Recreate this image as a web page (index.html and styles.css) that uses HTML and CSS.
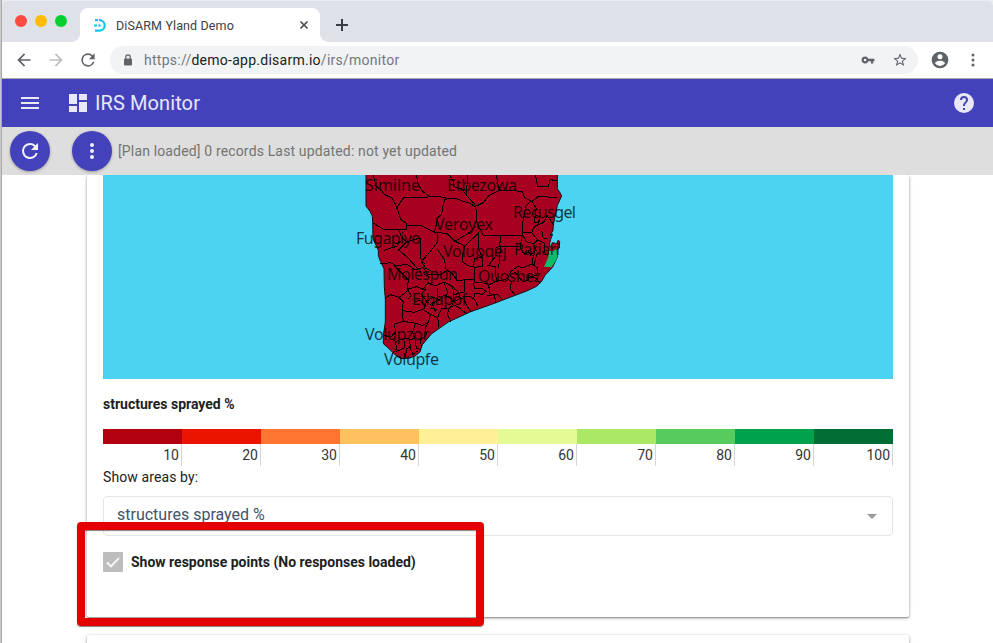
FILE: index.html
```html
<!DOCTYPE html>
<html lang="en">
<head>
<meta charset="utf-8">
<title>DiSARM Yland Demo</title>
<link rel="stylesheet" href="styles.css">
</head>
<body>
<div class="desktop">
<div class="window">
  <div class="tabs">
    <div class="lights"><i class="red"></i><i class="yellow"></i><i class="green"></i></div>
    <div class="tab">
      <svg class="favicon" width="12" height="13" viewBox="0 0 12 13"><path d="M1 1.2h4.5a5.2 5.2 0 0 1 0 10.4H1" fill="none" stroke="#0fc6ee" stroke-width="2.2" stroke-dasharray="3 1 30"/><path d="M0 6.4h3" stroke="#0fc6ee" stroke-width="2"/><circle cx="5.5" cy="6.4" r="1.2" fill="#0fc6ee"/></svg>
      <span class="tab-title">DiSARM Yland Demo</span>
      <svg class="close" width="8" height="8" viewBox="0 0 8 8"><path d="M.5.5l7 7M7.500.5l-7 7" stroke="#50545a" stroke-width="1.6"/></svg>
    </div>
    <svg class="plus" width="12" height="12" viewBox="0 0 12 12"><path d="M6 0v12M0 6h12" stroke="#3b3f43" stroke-width="2"/></svg>
  </div>
  <div class="toolbar">
    <svg class="nav" viewBox="0 0 24 24"><path fill="#5f6368" d="M20 11H7.830l5.590-5.590L12 4l-8 8 8 8 1.410-1.410L7.830 13H20v-2z"/></svg>
    <svg class="nav" viewBox="0 0 24 24"><path fill="#bcbec1" d="M4 11h12.170l-5.590-5.590L12 4l8 8-8 8-1.410-1.410L16.170 13H4v-2z"/></svg>
    <svg class="nav" viewBox="0 0 24 24"><path fill="#5f6368" d="M17.650 6.350A7.960 7.960 0 0 0 12 4a8 8 0 1 0 7.730 10h-2.080A6 6 0 1 1 12 6c1.660 0 3.140.69 4.220 1.780L13 11h7V4l-2.350 2.350z"/></svg>
    <div class="address">
      <svg class="lock" width="8" height="12" viewBox="0 0 8 12"><rect y="4.500" width="8" height="7" rx="1" fill="#5f6368"/><path d="M1.800 5V3a2.200 2.200 0 0 1 4.400 0v2" fill="none" stroke="#5f6368" stroke-width="1.200"/></svg>
      <span class="url">https://<b>demo-app.disarm.io</b>/irs/monitor</span>
      <svg class="key" width="14" height="14" viewBox="0 0 24 24"><path fill="#5f6368" d="M12.650 10A6 6 0 0 0 7 6a6 6 0 1 0 5.650 8H17v4h4v-4h2v-4H12.650zM7 14.200a2.200 2.200 0 1 1 0-4.400 2.200 2.200 0 0 1 0 4.400z"/></svg>
      <svg class="star" width="16" height="16" viewBox="0 0 24 24"><path fill="#5f6368" d="M22 9.240l-7.190-.62L12 2 9.190 8.630 2 9.240l5.460 4.730L5.820 21 12 17.270 18.180 21l-1.630-7.030L22 9.240zM12 15.400l-3.760 2.270 1-4.280-3.320-2.880 4.380-.38L12 6.100l1.710 4.040 4.380.38-3.320 2.880 1 4.280L12 15.400z"/></svg>
    </div>
    <svg class="avatar" width="20" height="20" viewBox="0 0 24 24"><path fill="#5f6368" d="M12 2a10 10 0 1 0 0 20 10 10 0 0 0 0-20zm0 3a3 3 0 1 1 0 6 3 3 0 0 1 0-6zm0 14.200a7.200 7.200 0 0 1-6-3.220c.03-1.990 4-3.080 6-3.080s5.970 1.090 6 3.080a7.200 7.200 0 0 1-6 3.220z"/></svg>
    <svg class="more" width="4" height="14" viewBox="0 0 4 14" fill="#5f6368"><circle cx="2" cy="2" r="1.500"/><circle cx="2" cy="7" r="1.500"/><circle cx="2" cy="12" r="1.500"/></svg>
  </div>
  <header class="appbar">
    <svg class="menu" width="18" height="12" viewBox="0 0 18 12"><path fill="#e8e8f8" d="M0 0h18v2H0zM0 5h18v2H0zM0 10h18v2H0z"/></svg>
    <svg class="dash" width="18" height="18" viewBox="0 0 18 18"><path fill="#e8e8f8" d="M0 0h8v10H0zM0 12h8v6H0zM10 0h8v6h-8zM10 8h8v10h-8z"/></svg>
    <h1>IRS Monitor</h1>
    <svg class="help" width="20" height="20" viewBox="2 2 20 20"><path fill="#e8e8f8" d="M12 2a10 10 0 1 0 0 20 10 10 0 0 0 0-20zm1 17h-2v-2h2v2zm2.070-7.750l-.9.920C13.450 12.900 13 13.500 13 15h-2v-.5c0-1.100.45-2.100 1.170-2.830l1.240-1.260c.37-.36.590-.86.590-1.410a2 2 0 0 0-4 0H8a4 4 0 1 1 8 0c0 .88-.36 1.680-.93 2.250z"/></svg>
  </header>
  <div class="status">
    <div class="fab"><svg width="24" height="24" viewBox="0 0 24 24"><path fill="#f0f0fb" d="M17.650 6.350A7.960 7.960 0 0 0 12 4a8 8 0 1 0 7.730 10h-2.080A6 6 0 1 1 12 6c1.660 0 3.140.69 4.220 1.780L13 11h7V4l-2.350 2.350z"/></svg></div>
    <div class="fab"><svg width="24" height="24" viewBox="0 0 24 24" fill="#f0f0fb"><circle cx="12" cy="6" r="2"/><circle cx="12" cy="12" r="2"/><circle cx="12" cy="18" r="2"/></svg></div>
    <span class="status-text">[Plan loaded] 0 records Last updated: not yet updated</span>
  </div>
  <main>
    <section class="card">
      <svg class="map" width="790" height="204" viewBox="103 175 790 204">
        <g transform="translate(360 172) scale(.33333)">
          <path class="land" d="M18 0V102L30 118 37 132 38 152 39 200 55 235V250L60 265 72 290 73 345 76 380V450L70 490V515L85 528 105 548 125 560 150 558 165 552 180 540 187 518 215 485 265 450 330 420 400 395 500 357 530 343 545 328 555 310 578 285 592 255 590 235 598 228 599 208 594 205 590 215 577 212 572 225 568 219 572 202 578 186 570 190 579 176 580 158 588 120 592 100 605 72 600 62 592 50V0Z"/>
          <path class="green" d="M566 236L578 238 590 232 592 257 575 286 552 284 565 255Z"/>
          <path class="edge" d="M40 9L48 42 64 54 74 68 96 78 107 98 114 118M170 9L173 35 186 56 205 72 256 76 249 103 245 127 233 137 224 180 M114 118L111 107 130 78 205 76M114 118L122 142 140 155 139 172 72 173 38 152M140 162L186 162 205 172 222 180M256 82L282 78 310 88 330 94 345 104 370 92 385 72 420 54 487 58 494 78 516 88 537 72 592 78M268 9L280 27 281 44 305 51 319 69 345 98 351 124 349 147 357 164 370 190 487 190M319 69L323 9M420 54L414 39 409 9M526 9L533 43 565 44 570 23 592 26M511 88L497 104 493 129 488 153 487 190M516 88L529 110 524 126 540 136 535 150 524 152 526 126M485 182L515 182 523 163 550 152 562 132 581 158M515 182L533 204 521 215 500 210 488 190M222 180L262 185 285 208 315 222 308 248 308 270 326 282 341 284 343 260 367 256 368 283 343 286 343 330 367 332M234 180L232 210 210 240 184 268 198 290 218 300M232 232L254 264 257 290M285 208L330 180 347 164M315 222L340 198 357 182 355 225 366 256M116 173L124 195 139 210 180 198 183 230 180 258 194 276M139 210L116 234 142 256 184 302M71 235L110 223 122 206M60 276L91 272 110 281 142 277 165 294 190 286 202 306 240 309 262 294 279 307 291 325 343 322M102 281L124 302 145 324 142 352 170 344 190 352 203 332 225 342 252 330 278 344 282 368 313 360 313 325M75 380L91 368 117 376 137 362 147 350M117 376L130 390 126 416 163 421 193 410 200 388 184 368 199 347M126 416L130 448 104 456 106 480 92 496 73 490M130 448L167 454 186 460 206 450 211 426 192 415M206 450L195 469 200 488 180 505 185 525M167 454L158 480 164 500 148 502 151 523 140 531 136 558M93 502L108 508 133 500 160 502M106 510L110 530 98 545M133 506L132 529 109 538M148 522L160 549M165 500L169 529 184 533M211 426L233 438 237 465M232 438L245 410 265 410 283 400 297 407 320 425M265 410L263 430 273 450M200 388L219 376 238 384 251 369 272 378 279 391 300 379 312 382 321 402 333 420M234 348L234 380 217 398 227 420M252 332L264 362 253 378M277 344L296 362 300 379M340 332L344 350 367 350 378 358 366 367 344 364 341 381 328 372 312 375M344 381L354 404M370 332L387 338 409 328 406 283 380 281M386 340L390 365 404 372 407 394M380 370L412 368 428 382M409 328L443 320 451 300 475 282 487 288 516 276 520 252 505 240 492 247 480 224 422 222 416 288M422 192L419 222 408 228 408 252 384 282M443 320L454 330 451 350 464 369M464 300L489 330 505 323 504 310 528 319 540 334M516 276L533 288 532 311 514 313M487 190L480 224M521 215L528 235 510 250M533 204L555 214 552 241 565 253M541 236L529 250 522 281M545 176L550 198 565 202M540 136L535 158 522 166M142 352L154 370 144 382M163 390L180 384 194 402M210 398L220 390 212 410 230 412M155 550L175 535M282 368L280 392 269 410"/>
        </g>
        <g class="labels">
          <text x="365" y="191" textLength="55">Similne</text><text x="447" y="191" textLength="70">Etbezowa</text><text x="513" y="218" textLength="63">Recusgel</text><text x="435" y="230" textLength="58">Veroyex</text><text x="356" y="244" textLength="65">Fugapiyo</text><text x="443" y="257" textLength="64">Volupqej</text><text x="514" y="255" textLength="46">Pariari</text><text x="387" y="280" textLength="71">Molespun</text><text x="478" y="282" textLength="63">Quoshez</text><text x="412" y="305" textLength="55">Ethapof</text><text x="365" y="340" textLength="64">Volupzor</text><text x="384" y="365" textLength="55">Volupfe</text>
        </g>
      </svg>
      <h2>structures sprayed %</h2>
      <div class="legend">
        <div class="c1"><span>10</span></div><div class="c2"><span>20</span></div><div class="c3"><span>30</span></div><div class="c4"><span>40</span></div><div class="c5"><span>50</span></div><div class="c6"><span>60</span></div><div class="c7"><span>70</span></div><div class="c8"><span>80</span></div><div class="c9"><span>90</span></div><div class="c10"><span>100</span></div>
      </div>
      <div class="label">Show areas by:</div>
      <div class="select"><span>structures sprayed %</span><i class="caret"></i></div>
      <div class="check"><span class="box"><svg width="20" height="20" viewBox="0 0 20 20"><path d="M4 10.500l4 4 8-8.500" fill="none" stroke="#f6f6f6" stroke-width="1.900"/></svg></span><span>Show response points (No responses loaded)</span></div>
    </section>
    <section class="card next"></section>
  </main>
</div>
<div class="highlight"></div>
</div>
</body>
</html>
```

FILE: styles.css
```css
* { box-sizing: border-box; }
body { margin: 0; font-family: Roboto, sans-serif; color: #212121; }
svg { display: block; flex: none; }
.desktop { position: relative; width: 993px; height: 643px; overflow: hidden; padding: 1px 0 0 2px; background: linear-gradient(90deg, #c9c9c9 1px, #a8a8a8 1px, #a8a8a8 2px, #e9edf0 2px); }
.window { height: 642px; display: flex; flex-direction: column; background: #fff; border-radius: 5px 5px 0 0; overflow: hidden; }
.tabs { height: 41px; flex: none; display: flex; background: #dee1e8; }
.lights { display: flex; gap: 8px; padding: 14px 0 0 13px; width: 78px; flex: none; }
.lights i { width: 12px; height: 12px; border-radius: 50%; flex: none; }
.red { background: #fe4a43; }
.yellow { background: #ffbb05; }
.green { background: #06d02f; fill: #0bbd68; }
.tab { position: relative; width: 240px; height: 34px; margin-top: 7px; background: #fff; border-radius: 8px 8px 0 0; display: flex; align-items: center; padding: 0 12px 0 14px; }
.tab::before, .tab::after { content: ""; position: absolute; bottom: 0; width: 8px; height: 8px; }
.tab::before { left: -8px; background: radial-gradient(circle at 0 0, #dee1e8 7.500px, #fff 8px); }
.tab::after { right: -8px; background: radial-gradient(circle at 100% 0, #dee1e8 7.500px, #fff 8px); }
.tab-title { margin-left: 10px; font-size: 12.500px; letter-spacing: .12px; color: #3c4043; flex: 1; }
.plus { margin: 18px 0 0 16px; }
.toolbar { height: 37px; flex: none; display: flex; align-items: center; padding: 0 18px 0 12px; border-bottom: 1px solid #aaa; }
.nav { width: 20px; height: 20px; margin-right: 12px; }
.address { flex: 1; height: 28px; border-radius: 14px; background: #f1f3f4; display: flex; align-items: center; padding: 0 10px 0 14px; }
.url { margin-left: 12px; flex: 1; font-size: 14px; letter-spacing: .26px; color: #74787d; }
.url b { font-weight: 400; color: #202124; }
.star { margin-left: 17px; }
.avatar { margin-left: 12px; }
.more { margin-left: 21px; }
.toolbar .nav:nth-child(3) { margin-right: 12px; }
.appbar { height: 48px; flex: none; background: #4442bb; color: #e8e8f8; display: flex; align-items: center; padding: 0 19px; }
.dash { margin-left: 30px; }
h1 { margin: 0 0 0 8px; font-size: 20px; font-weight: 400; letter-spacing: .1px; flex: 1; }
.status { height: 48px; flex: none; background: #dedede; display: flex; align-items: center; padding-left: 8px; position: relative; z-index: 2; }
.fab { width: 40px; height: 40px; border-radius: 50%; background: #4442bb; display: flex; align-items: center; justify-content: center; margin-right: 22px; box-shadow: 0 1px 3px rgba(0,0,0,.3); }
.fab + .fab { margin-right: 6px; }
.status-text { font-size: 14px; letter-spacing: .15px; color: #747474; }
main { flex: 1; min-height: 0; overflow: hidden; padding: 0 84px 0 85px; }
.card { width: 822px; height: 442px; padding: 0 16px; background: #fff; border-radius: 2px; box-shadow: 0 1px 2px rgba(0,0,0,.4), 0 1px 4px rgba(0,0,0,.18); }
.card.next { margin-top: 18px; height: 80px; }
.land { fill: #a80021; stroke: #111; stroke-width: 1; vector-effect: non-scaling-stroke; }
.map { background: #4dd3f2; }
.map .green { stroke: none; }
.edge { fill: none; stroke: #000; stroke-width: 1; vector-effect: non-scaling-stroke; shape-rendering: crispEdges; }
.labels { font-family: "Noto Sans", sans-serif; font-size: 16px; fill: #000; fill-opacity: .76; }
h2 { margin: 16px 0; height: 18px; font-size: 14px; line-height: 18px; font-weight: 700; }
.legend { display: grid; grid-template-columns: repeat(10, 79px); height: 37px; }
.legend div { border-top: 15px solid; }
.legend span { display: block; height: 22px; border-right: 1px solid #d5d5d5; padding: 1px 2px 0 0; text-align: right; color: #333; font-size: 14px; line-height: 21px; }
.c1 { border-color: #b3000f !important; }
.c2 { border-color: #eb1400 !important; }
.c3 { border-color: #ff742e !important; }
.c4 { border-color: #ffc05d !important; }
.c5 { border-color: #fff096 !important; }
.c6 { border-color: #e4fb95 !important; }
.c7 { border-color: #abe866 !important; }
.c8 { border-color: #58cb5e !important; }
.c9 { border-color: #00a24d !important; }
.c10 { border-color: #006d35 !important; }
.label { height: 30px; line-height: 22px; font-size: 14px; letter-spacing: .1px; }
.select { height: 40px; border: 1px solid #e5e5e5; border-radius: 4px; display: flex; align-items: center; justify-content: space-between; padding: 0 15px 4px 13px; color: #42536b; font-size: 16px; }
.caret { border: 5px solid transparent; border-top-color: #999; border-bottom: 0; margin-top: 4px; }
.check { display: flex; align-items: center; margin-top: 16px; gap: 8px; font-size: 14px; font-weight: 700; }
.box { width: 20px; height: 20px; background: #bdbdbd; border-radius: 1px; }
.highlight { position: absolute; left: 77px; top: 522px; width: 407px; height: 104px; border: 8px solid #e50000; border-radius: 4px; box-shadow: 0 1px 1px rgba(0,0,0,.5), inset 0 1px 1px rgba(0,0,0,.5); z-index: 3; }
```
